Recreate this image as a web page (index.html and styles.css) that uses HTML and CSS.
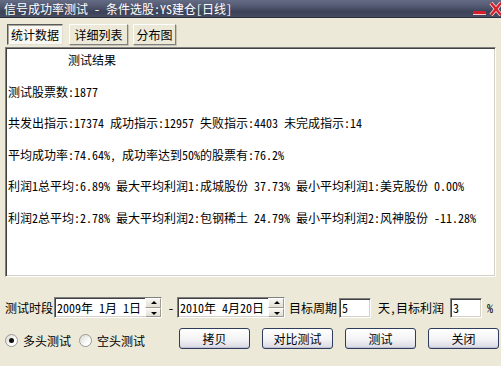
FILE: index.html
```html
<!DOCTYPE html>
<html lang="zh-CN">
<head>
  <meta charset="UTF-8">
  <title>信号成功率测试</title>
  <link rel="stylesheet" href="styles.css">
</head>
<body>
  <div class="window">
    <div class="titlebar">
      <span class="title">信号成功率测试 - 条件选股:YS建仓[日线]</span>
      <svg class="controls" width="30" height="17" viewBox="0 0 30 17">
        <rect x="1" y="11" width="13" height="3" fill="#d61f2b"/>
        <rect x="1" y="14" width="13" height="1" fill="#f3c9cc"/>
        <path d="M19 3 L29 15 M29 3 L19 15" stroke="#f6d6d8" stroke-width="4"/>
        <path d="M19 3 L29 15 M29 3 L19 15" stroke="#d61f2b" stroke-width="2.4"/>
      </svg>
    </div>

    <div class="tabs">
      <button class="tab active tab-stats">统计数据</button>
      <button class="tab tab-list">详细列表</button>
      <button class="tab tab-dist">分布图</button>
    </div>

    <div class="result">
      <p class="heading">测试结果</p>
      <p>测试股票数:1877</p>
      <p>共发出指示:17374 成功指示:12957 失败指示:4403 未完成指示:14</p>
      <p>平均成功率:74.64%, 成功率达到50%的股票有:76.2%</p>
      <p>利润1总平均:6.89% 最大平均利润1:成城股份 37.73% 最小平均利润1:美克股份 0.00%</p>
      <p>利润2总平均:2.78% 最大平均利润2:包钢稀土 24.79% 最小平均利润2:风神股份 -11.28%</p>
    </div>

    <div class="params">
      <span class="label">测试时段</span>
      <div class="datebox first">
        <span>2009年 1月 1日</span>
        <div class="spin"><span class="up"></span><span class="down"></span></div>
      </div>
      <span class="dash">-</span>
      <div class="datebox second">
        <span>2010年 4月20日</span>
        <div class="spin"><span class="up"></span><span class="down"></span></div>
      </div>
      <span class="label period">目标周期</span>
      <input class="field days" type="text" value="5">
      <span class="label target">天,目标利润</span>
      <input class="field profit" type="text" value="3">
      <span class="percent">%</span>
    </div>

    <div class="actions">
      <div class="radios">
        <label class="radio"><span class="dot checked"></span>多头测试</label>
        <label class="radio short"><span class="dot"></span>空头测试</label>
      </div>
      <div class="buttons">
        <button class="btn">拷贝</button>
        <button class="btn">对比测试</button>
        <button class="btn">测试</button>
        <button class="btn">关闭</button>
      </div>
    </div>
  </div>
</body>
</html>
```

FILE: styles.css
```css
* {
  box-sizing: border-box;
}

body {
  margin: 0;
  background: #ece9d8;
  font-family: "Noto Sans CJK SC", sans-serif;
  font-size: 12px;
  font-feature-settings: "hwid";
  color: #000;
}

.window {
  width: 501px;
  height: 366px;
  overflow: hidden;
}

button,
input {
  font: inherit;
  font-feature-settings: "hwid";
  color: #000;
}

/* title bar */
.titlebar {
  height: 18px;
  display: flex;
  align-items: center;
  justify-content: space-between;
  padding-left: 4px;
  background: linear-gradient(#646b84 0, #545a72 35%, #3c4257 70%, #464c62 100%);
  border-bottom: 1px solid #2b3040;
  color: #fff;
  line-height: 17px;
}

.controls {
  display: block;
  margin-right: -1px;
}

/* tabs */
.tabs {
  display: flex;
  padding: 6px 0 0 7px;
}

.tab {
  height: 21px;
  padding: 0;
  margin-right: 6px;
  background: #ece9d8;
  border: 1px solid;
  border-color: #fff #808080 #808080 #fff;
  box-shadow: 1px 1px 0 #c8c5b6;
  line-height: 19px;
}

.tab-stats { width: 56px; }
.tab-list { width: 59px; margin-right: 5px; }
.tab-dist { width: 43px; }

.tab.active {
  background: #f8f7f2;
  border-color: #5a5a5a #e0ded2 #e0ded2 #5a5a5a;
  box-shadow: inset 1px 1px 0 #a9a79c;
}

/* result text */
.result {
  margin: 2px 0 0 5px;
  width: 491px;
  height: 230px;
  padding: 4px 0 0 2px;
  background: #fff;
  border: 1px solid;
  border-color: #808080 #fff #fff #808080;
  box-shadow: inset 1px 1px 0 #404040, inset -1px -1px 0 #d4d0c8;
}

.result p {
  margin: 0 0 16px;
  line-height: 15.5px;
  white-space: pre;
}

.result .heading {
  padding-left: 60px;
}

/* parameter row */
.params {
  display: flex;
  align-items: center;
  height: 21px;
  margin-top: 20px;
  padding-left: 5px;
  white-space: pre;
}

.datebox {
  display: flex;
  align-items: center;
  justify-content: space-between;
  width: 108px;
  height: 21px;
  padding-left: 2px;
  background: #fff;
  border: 1px solid;
  border-color: #808080 #fff #fff #808080;
  box-shadow: inset 1px 1px 0 #404040, inset -1px -1px 0 #d4d0c8;
}

.datebox.first { margin-left: 1px; }
.datebox.second { margin-left: 3px; }

.spin {
  display: flex;
  flex-direction: column;
  width: 16px;
  height: 19px;
}

.spin span {
  position: relative;
  flex: 1;
  background: linear-gradient(#f6f5f0, #e3e1d6);
  border: 1px solid;
  border-color: #fff #9d9b90 #9d9b90 #fff;
}

.spin span::after {
  content: "";
  position: absolute;
  left: 5px;
  border-left: 3px solid transparent;
  border-right: 3px solid transparent;
}

.spin .up::after {
  top: 2px;
  border-bottom: 3px solid #000;
}

.spin .down::after {
  top: 3px;
  border-top: 3px solid #000;
}

.dash {
  margin-left: 6px;
}

.label.period { margin-left: 4px; }
.label.target { margin-left: 7px; }

.field {
  width: 32px;
  height: 20px;
  padding: 0 0 0 2px;
  background: #fff;
  border: 1px solid;
  border-color: #808080 #fff #fff #808080;
  box-shadow: inset 1px 1px 0 #404040, inset -1px -1px 0 #d4d0c8;
  outline: none;
}

.field.days { margin-left: 2px; }
.field.profit { margin-left: 6px; }

.percent {
  margin-left: 5px;
}

/* bottom row */
.actions {
  display: flex;
  align-items: flex-start;
  margin-top: 10px;
}

.radios {
  display: flex;
  padding: 6px 0 0 5px;
}

.radio {
  display: flex;
  align-items: center;
  line-height: 13px;
}

.radio.short {
  margin-left: 8px;
}

.dot {
  position: relative;
  width: 13px;
  height: 13px;
  margin-right: 5px;
  border: 1px solid #9a9a94;
  border-radius: 50%;
  background: linear-gradient(135deg, #d9d8d0, #fff 70%);
}

.dot.checked::after {
  content: "";
  position: absolute;
  left: 3px;
  top: 3px;
  width: 5px;
  height: 5px;
  border-radius: 50%;
  background: #111;
}

.buttons {
  display: flex;
  gap: 12px;
  margin-left: 34px;
}

.btn {
  width: 71px;
  height: 21px;
  padding: 0;
  border: 1px solid #2e3d5c;
  border-radius: 3px;
  background: linear-gradient(#ffffff, #f3f3f5 55%, #d9d8e3);
  box-shadow: inset 0 -1px 0 #c3c2d2;
  line-height: 19px;
}
```
